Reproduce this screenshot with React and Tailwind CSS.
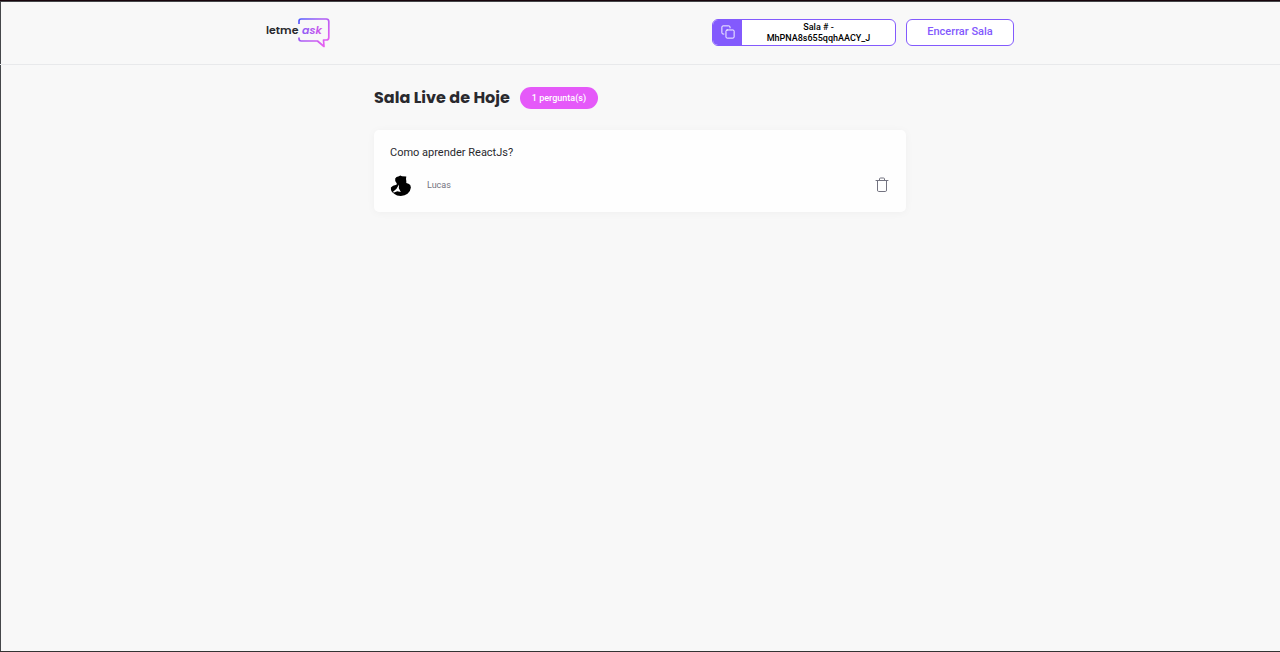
function Logo() {
  return (
    <svg viewBox="0 0 64 32" className="h-8 w-16" role="img" aria-label="letmeask">
      <defs>
        <linearGradient id="bubble" x1="32" y1="2" x2="62" y2="30" gradientUnits="userSpaceOnUse">
          <stop offset="0" stopColor="#485bff" />
          <stop offset="0.4" stopColor="#a45cf5" />
          <stop offset="1" stopColor="#f060f0" />
        </linearGradient>
        <linearGradient id="ask" x1="36" y1="0" x2="57" y2="0" gradientUnits="userSpaceOnUse">
          <stop offset="0" stopColor="#8b5cf6" />
          <stop offset="1" stopColor="#d957ea" />
        </linearGradient>
      </defs>
      <path
        d="M33 8V5.2Q33 3 35.2 3H60.3Q62.8 3 62.8 5.5V21.5Q62.8 24 60.3 24H57.500L58 30.5L51.5 25H35.2Q33 25 33 22.8V21.5"
        fill="none"
        stroke="url(#bubble)"
        strokeWidth="1.7"
        strokeLinejoin="round"
      />
      <text x="0" y="18" fill="#29292e" className="font-['Poppins','Inter',sans-serif] text-[11px] font-semibold">
        letme
      </text>
      <text x="36" y="18" fill="url(#ask)" className="font-['Poppins','Inter',sans-serif] text-[11px] font-semibold italic">
        ask
      </text>
    </svg>
  );
}

function CopyIcon() {
  return (
    <svg viewBox="0 0 24 24" className="size-[14px]" fill="none" stroke="#ffffff" strokeWidth="1.6" strokeLinecap="round" strokeLinejoin="round" aria-hidden="true">
      <rect x="8.5" y="8.5" width="14" height="14" rx="2" />
      <path d="M5 15.5H3.5a2 2 0 0 1-2-2V3.5a2 2 0 0 1 2-2h10a2 2 0 0 1 2 2v1.5" />
    </svg>
  );
}

function TrashIcon() {
  return (
    <svg viewBox="0 0 16 16" className="size-4" fill="none" stroke="#737380" strokeLinecap="round" strokeLinejoin="round" aria-hidden="true">
      <path d="M2 3.5h12M3.5 3.5V13q0 1.500 1 1.5h7q1 0 1-1.5V3.5M5.5 3.5V2q0-1 1-1h3q1 0 1 1v1.5" />
    </svg>
  );
}

function Avatar() {
  return (
    <svg viewBox="0 0 22 22" className="size-[22px]" role="img" aria-label="Lucas">
      <path
        d="M5.2 4.500Q6 2.500 9 2.300L10.200 1.400L12 2.200L16.300 2.500L16 5Q16.500 7 16.300 9L18.500 9.800Q20.800 10.500 20.900 13.500Q20.500 17.500 17.500 19.800Q15 21.900 10.800 21.900Q6.500 21.900 4.500 20L2 18Q.5 15.800.9 13.500Q2.500 11.500 6.500 10.700L6.800 9.500Q4.500 7.500 5.2 4.500Z"
        fill="#000000"
      />
      <path d="M9 10.500L8.800 14.300L10.800 17.900L7.300 17.200L4 18.500L2.800 18L6.500 14.800Z" fill="#ffffff" />
    </svg>
  );
}

export default function App() {
  return (
    <div className="flex min-h-screen flex-col border-t border-b border-t-[#18050c] border-b-[#333333] bg-[#f8f8f8] font-['Roboto',sans-serif] text-[#29292e] shadow-[inset_1px_1px_0_#45474a]">
      <header className="border-b border-[#e8e9eb] px-4 pt-[15px] pb-4">
        <div className="mx-auto flex max-w-[748px] items-center justify-between">
          <a href="#">
            <Logo />
          </a>
          <div className="flex gap-[10px]">
            <button type="button" className="flex h-[27px] w-[184px] cursor-pointer overflow-hidden rounded-md border border-[#835afd] bg-white text-[9px] leading-[11px] font-medium text-black">
              <span className="flex w-[29px] shrink-0 items-center justify-center self-stretch bg-[#835afd]">
                <CopyIcon />
              </span>
              <span className="flex-1 self-center px-4 pt-px text-center">Sala # - MhPNA8s655qqhAACY_J</span>
            </button>
            <button type="button" className="h-[27px] w-[108px] cursor-pointer rounded-md border border-[#835afd] bg-white pt-px text-[11px] font-medium text-[#835afd]">
              Encerrar Sala
            </button>
          </div>
        </div>
      </header>

      <main className="px-4 pt-[21px]">
        <div className="mx-auto max-w-[532px]">
          <div className="flex items-center gap-[10px]">
            <h1 className="font-['Poppins','Inter',sans-serif] text-base leading-6 font-bold">Sala Live de Hoje</h1>
            <span className="rounded-full bg-[#e559f9] px-3 py-1 text-[9px] leading-[14px] font-medium text-white">
              1 pergunta(s)
            </span>
          </div>
          <article className="mt-5 rounded-[5px] bg-[#fefefe] p-4 shadow-[0_1px_8px_rgba(0,0,0,0.04)]">
            <p className="text-[11px] leading-[14px]">Como aprender ReactJs?</p>
            <footer className="mt-[14px] flex items-center justify-between">
              <div className="flex items-center gap-[15px]">
                <Avatar />
                <span className="text-[9px] leading-3 text-[#737380]">Lucas</span>
              </div>
              <button type="button" aria-label="Remover pergunta" className="cursor-pointer">
                <TrashIcon />
              </button>
            </footer>
          </article>
        </div>
      </main>
    </div>
  );
}
